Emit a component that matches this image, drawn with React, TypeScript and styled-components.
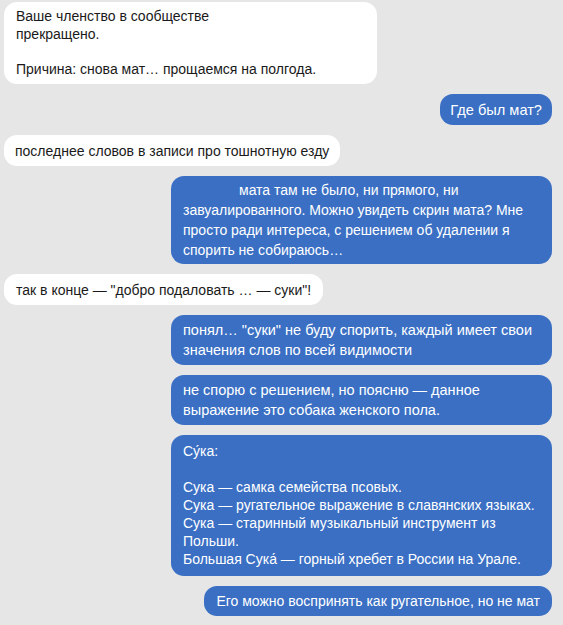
import React from "react";
import styled, { createGlobalStyle } from "styled-components";

const Global = createGlobalStyle`
  html, body { margin: 0; padding: 0; background: #e6e6e6; }
  body { font-family: "Liberation Sans", Arial, sans-serif; }
`;

const Chat = styled.div`
  display: flex;
  flex-direction: column;
  gap: 10px;
  padding: 2px 11px 10px 4px;
  width: 563px;
  box-sizing: border-box;
  background: #e6e6e6;
  min-height: 625px;
`;

const Bubble = styled.div<{
  $out?: boolean;
  $w?: number;
  $lh?: number;
  $fs?: number;
  $pad?: string;
}>`
  align-self: ${(p) => (p.$out ? "flex-end" : "flex-start")};
  background: ${(p) => (p.$out ? "#3a6fc4" : "#ffffff")};
  color: ${(p) => (p.$out ? "#ffffff" : "#1a1a1a")};
  border-radius: 13px;
  box-sizing: border-box;
  width: ${(p) => (p.$w ? `${p.$w}px` : "auto")};
  padding: ${(p) => p.$pad ?? "6px 11px 5px"};
  font-size: ${(p) => p.$fs ?? 14}px;
  line-height: ${(p) => p.$lh ?? 20}px;
  white-space: nowrap;
`;

const Indent = styled.span`
  display: inline-block;
  width: 56px;
`;

export default function App() {
  return (
    <Chat>
      <Global />
      <Bubble $w={373} $lh={17.5} $pad="6px 12px 6px">
        Ваше членство в сообществе
        <br />
        прекращено.
        <br />
        <br />
        Причина: снова мат… прощаемся на полгода.
      </Bubble>
      <Bubble $out $fs={14.6} $pad="6px 10px 5px">
        Где был мат?
      </Bubble>
      <Bubble $pad="6px 11px 5px">
        последнее словов в записи про тошнотную езду
      </Bubble>
      <Bubble $out $w={381} $pad="4px 12px 4px">
        <Indent />
        мата там не было, ни прямого, ни
        <br />
        завуалированного. Можно увидеть скрин мата? Мне
        <br />
        просто ради интереса, с решением об удалении я
        <br />
        спорить не собираюсь…
      </Bubble>
      <Bubble $pad="6px 12px 5px">
        так в конце — "добро подаловать … — суки"!
      </Bubble>
      <Bubble $out $w={381} $fs={14.5} $pad="5px 12px 5px">
        понял… "суки" не буду спорить, каждый имеет свои
        <br />
        значения слов по всей видимости
      </Bubble>
      <Bubble $out $w={381} $fs={14.5} $pad="5px 12px 5px">
        не спорю с решением, но поясню — данное
        <br />
        выражение это собака женского пола.
      </Bubble>
      <Bubble $out $w={381} $lh={18} $pad="7px 12px 8px">
        Су́ка:
        <br />
        <br />
        Сука — самка семейства псовых.
        <br />
        Сука — ругательное выражение в славянских языках.
        <br />
        Сука — старинный музыкальный инструмент из
        <br />
        Польши.
        <br />
        Большая Сука́ — горный хребет в России на Урале.
      </Bubble>
      <Bubble $out $pad="5px 12px 5px">
        Его можно воспринять как ругательное, но не мат
      </Bubble>
    </Chat>
  );
}
